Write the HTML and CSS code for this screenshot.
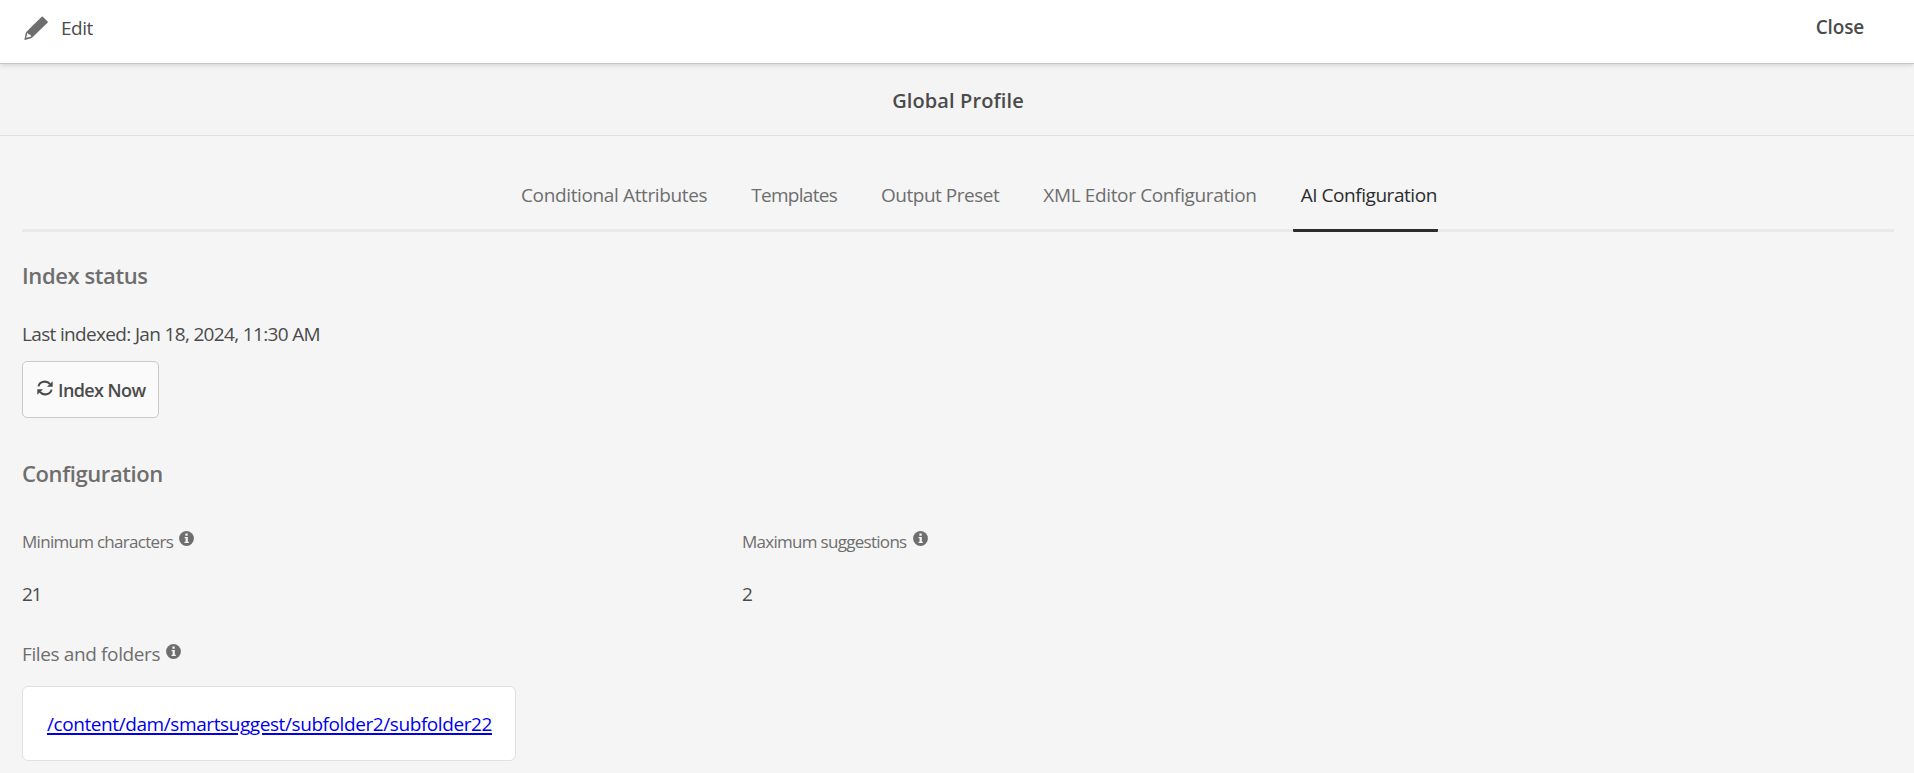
FILE: index.html
```
<!DOCTYPE html>
<html lang="en">
<head>
<meta charset="utf-8">
<title>Global Profile</title>
<link rel="stylesheet" href="styles.css">
</head>
<body>
<header class="topbar">
  <a class="edit">
    <svg class="pencil" viewBox="0 0 26 26"><path d="M19.5 0.8 L24.6 5.8 Q25.1 6.4 24.5 7 L22 9.4 L8.9 22.2 Q8.2 22.8 7.4 23.1 L1 24.9 Q.3 25 .5 24.3 L1.8 17.8 Q2 17 2.6 16.4 L18.4 0.9 Q19 .3 19.5.8Z M3.6 17.4 L2.3 22.6 L7.6 21.3 L6.6 19.4 L4.7 18.9Z" fill-rule="evenodd"/></svg>
    <span class="edit-label">Edit</span>
  </a>
  <button class="close">Close</button>
</header>
<div class="titlebar"><h1 class="title">Global Profile</h1></div>
<main class="page">
  <nav class="tabs">
    <a class="tab tab-attributes">Conditional Attributes</a>
    <a class="tab tab-templates">Templates</a>
    <a class="tab tab-preset">Output Preset</a>
    <a class="tab tab-editor">XML Editor Configuration</a>
    <a class="tab tab-ai active">AI Configuration</a>
  </nav>
  <h2 class="section">Index status</h2>
  <p class="indexed">Last indexed: Jan 18, 2024, 11:30 AM</p>
  <button class="index-now">
    <svg class="refresh" viewBox="0 0 16 16"><path d="M1.5 6.4 A6.3 5.6 0 0 1 13 4.2 M14.5 9.6 A6.3 5.6 0 0 1 3 11.8"/><path class="head" d="M15.7 1.2V6.8H10Z M.3 14.8V9.2H6Z"/></svg>
    <span>Index Now</span>
  </button>
  <h2 class="section config">Configuration</h2>
  <div class="fields">
    <div class="field">
      <div class="label"><span>Minimum characters</span><svg class="info" viewBox="0 0 15 15"><circle cx="7.5" cy="7.5" r="7.4"/><path d="M6.4 2.6h2.3v2.1H6.4z M5.6 6.1h3.2v4.7h1v1.2H5.5v-1.2h1.1V7.3h-1z"/></svg></div>
      <div class="value">21</div>
    </div>
    <div class="field">
      <div class="label"><span>Maximum suggestions</span><svg class="info" viewBox="0 0 15 15"><circle cx="7.5" cy="7.5" r="7.4"/><path d="M6.4 2.6h2.3v2.1H6.4z M5.6 6.1h3.2v4.7h1v1.2H5.5v-1.2h1.1V7.3h-1z"/></svg></div>
      <div class="value">2</div>
    </div>
  </div>
  <div class="label files"><span>Files and folders</span><svg class="info" viewBox="0 0 15 15"><circle cx="7.5" cy="7.5" r="7.4"/><path d="M6.4 2.6h2.3v2.1H6.4z M5.6 6.1h3.2v4.7h1v1.2H5.5v-1.2h1.1V7.3h-1z"/></svg></div>
  <div class="paths"><a class="path" href="#">/content/dam/smartsuggest/subfolder2/subfolder22</a></div>
</main>
</body>
</html>
```
FILE: styles.css
```
* { box-sizing: border-box; }
body { margin: 0; height: 773px; overflow: hidden; background: #f5f5f5; color: #4b4b4b; font: 19px/24px "Open Sans", "Noto Sans", sans-serif; }
h1, h2, p { margin: 0; }
button { font: inherit; color: inherit; padding: 0; border: 0; background: none; }
.topbar { position: relative; height: 64px; display: flex; justify-content: space-between; align-items: flex-start; background: #fff; border-bottom: 1px solid #c4c4c4; box-shadow: 0 1px 5px rgba(0,0,0,.15); padding: 15px 50px 0 24px; }
.edit { display: flex; gap: 12px; padding-top: 1px; letter-spacing: -.49px; }
.pencil { width: 25px; height: 25px; fill: #6e6e6e; }
.close { font-weight: 600; letter-spacing: -.17px; }
.titlebar { height: 72px; padding: 25px 0 0 2px; text-align: center; border-bottom: 1px solid #dfdfdf; background: #f4f4f4; }
.title { font-size: 20px; line-height: 24px; font-weight: 650; letter-spacing: .1px; }
.page { padding: 0 20px 0 22px; }
.tabs { display: flex; gap: 36px; padding: 47px 0 0 491px; border-bottom: 3px solid #e9e9e9; }
.tab { padding: 0 0 22px 8px; color: #6e6e6e; white-space: nowrap; }
.tab.active { margin-bottom: -3px; padding-right: 1.5px; color: #2c2c2c; background: linear-gradient(#2c2c2c, #2c2c2c) bottom / 100% 3px no-repeat; padding-bottom: 25px; border-radius: 0 0 1px 1px; }
.tab-attributes { letter-spacing: -.369px; }
.tab-templates { letter-spacing: -.705px; }
.tab-preset { letter-spacing: -.481px; }
.tab-editor { letter-spacing: -.362px; }
.tab-ai { letter-spacing: -.452px; }
.section { margin-top: 29px; font-size: 22px; line-height: 28px; font-weight: 650; color: #6e6e6e; letter-spacing: -.4px; }
.indexed { margin-top: 33px; letter-spacing: -.662px; }
.index-now { margin-top: 15px; display: flex; align-items: center; width: 137px; height: 57px; padding: 0 0 0 14px; gap: 5px; background: #fafafa; border: 1px solid #cacaca; border-radius: 5px; font-size: 18px; font-weight: 600; letter-spacing: -.6px; }
.refresh { width: 16px; height: 16px; margin-bottom: 3px; fill: none; stroke: #4b4b4b; stroke-width: 2; }
.head { fill: #4b4b4b; stroke: none; }
.section.config { margin-top: 41px; }
.fields { display: flex; margin-top: 42px; }
.field { width: 720px; }
.label { display: flex; gap: 6px; height: 24px; color: #6e6e6e; letter-spacing: -.375px; }
.field .label { font-size: 17px; line-height: 26px; letter-spacing: -.71px; }
.info { width: 15px; height: 15px; margin-top: 2px; fill: #6e6e6e; }
.info path { fill: #f5f5f5; }
.value { margin-top: 29px; letter-spacing: -1.4px; }
.files { margin-top: 36px; }
.paths { margin-top: 20px; width: 494px; height: 75px; padding: 25px 0 0 24px; background: #fff; border: 1px solid #e1e1e1; border-radius: 6px; }
.path { color: #00e; letter-spacing: -.414px; text-decoration-thickness: 2px; text-underline-offset: 2px; }
```
